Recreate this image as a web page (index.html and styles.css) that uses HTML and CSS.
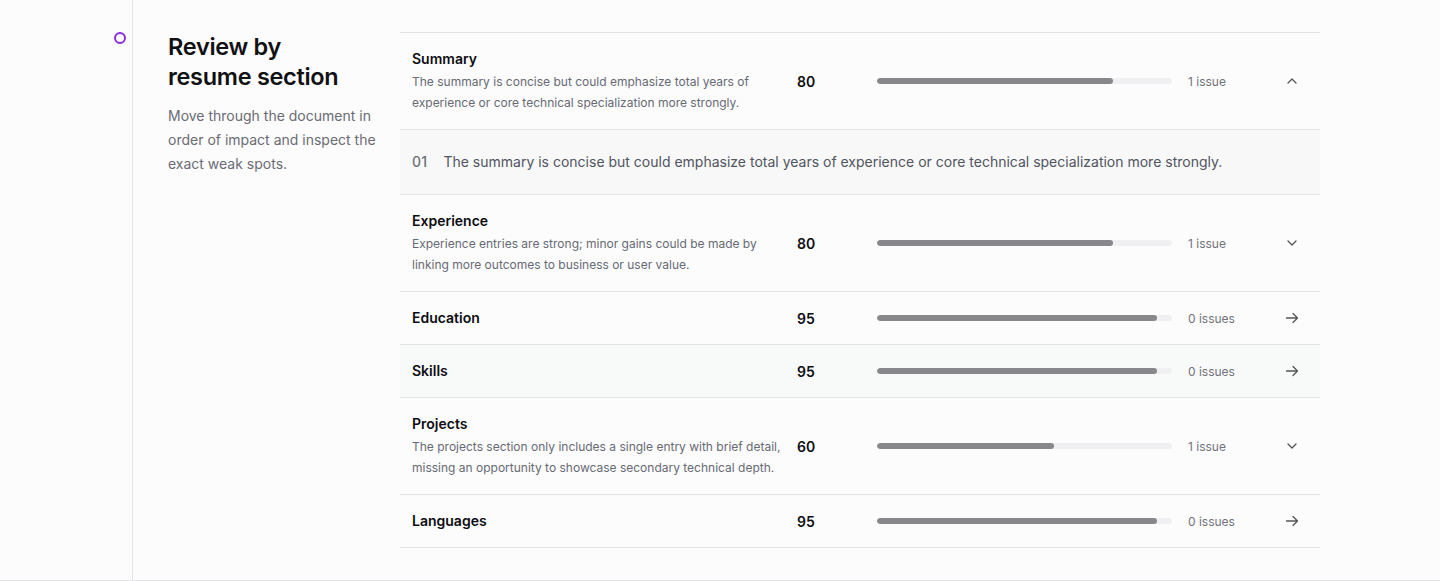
FILE: index.html
```html
<!DOCTYPE html>
<html lang="en">
<head>
<meta charset="utf-8">
<title>Review by resume section</title>
<link rel="stylesheet" href="styles.css">
</head>
<body>
<section class="section">
  <div class="rail">
    <span class="dot"></span>
  </div>
  <div class="content">
    <div class="intro">
      <h2 class="heading">Review by resume section</h2>
      <p class="lead">Move through the document in order of impact and inspect the exact weak spots.</p>
    </div>
    <div class="list">
      <div class="row">
        <div class="info">
          <div class="title">Summary</div>
          <div class="desc">The summary is concise but could emphasize total years of experience or core technical specialization more strongly.</div>
        </div>
        <div class="score">80</div>
        <div class="track"><div class="fill" style="width:80%"></div></div>
        <div class="issues">1 issue</div>
        <div class="icon"><svg viewBox="0 0 16 16" width="16" height="16"><path d="M4 10l4-4 4 4" fill="none" stroke="#555" stroke-width="1.3" stroke-linecap="round" stroke-linejoin="round"/></svg></div>
      </div>
      <div class="detail">
        <span class="num">01</span>
        <span class="detail-text">The summary is concise but could emphasize total years of experience or core technical specialization more strongly.</span>
      </div>
      <div class="row">
        <div class="info">
          <div class="title">Experience</div>
          <div class="desc">Experience entries are strong; minor gains could be made by linking more outcomes to business or user value.</div>
        </div>
        <div class="score">80</div>
        <div class="track"><div class="fill" style="width:80%"></div></div>
        <div class="issues">1 issue</div>
        <div class="icon"><svg viewBox="0 0 16 16" width="16" height="16"><path d="M4 6l4 4 4-4" fill="none" stroke="#555" stroke-width="1.3" stroke-linecap="round" stroke-linejoin="round"/></svg></div>
      </div>
      <div class="row">
        <div class="info"><div class="title">Education</div></div>
        <div class="score">95</div>
        <div class="track"><div class="fill" style="width:95%"></div></div>
        <div class="issues">0 issues</div>
        <div class="icon"><svg viewBox="0 0 16 16" width="16" height="16"><path d="M2.5 8h11M9 3.5L13.5 8 9 12.5" fill="none" stroke="#555" stroke-width="1.3" stroke-linecap="round" stroke-linejoin="round"/></svg></div>
      </div>
      <div class="row row-hover">
        <div class="info"><div class="title">Skills</div></div>
        <div class="score">95</div>
        <div class="track"><div class="fill" style="width:95%"></div></div>
        <div class="issues">0 issues</div>
        <div class="icon"><svg viewBox="0 0 16 16" width="16" height="16"><path d="M2.5 8h11M9 3.5L13.5 8 9 12.5" fill="none" stroke="#555" stroke-width="1.3" stroke-linecap="round" stroke-linejoin="round"/></svg></div>
      </div>
      <div class="row">
        <div class="info">
          <div class="title">Projects</div>
          <div class="desc">The projects section only includes a single entry with brief detail, missing an opportunity to showcase secondary technical depth.</div>
        </div>
        <div class="score">60</div>
        <div class="track"><div class="fill" style="width:60%"></div></div>
        <div class="issues">1 issue</div>
        <div class="icon"><svg viewBox="0 0 16 16" width="16" height="16"><path d="M4 6l4 4 4-4" fill="none" stroke="#555" stroke-width="1.3" stroke-linecap="round" stroke-linejoin="round"/></svg></div>
      </div>
      <div class="row">
        <div class="info"><div class="title">Languages</div></div>
        <div class="score">95</div>
        <div class="track"><div class="fill" style="width:95%"></div></div>
        <div class="issues">0 issues</div>
        <div class="icon"><svg viewBox="0 0 16 16" width="16" height="16"><path d="M2.5 8h11M9 3.5L13.5 8 9 12.5" fill="none" stroke="#555" stroke-width="1.3" stroke-linecap="round" stroke-linejoin="round"/></svg></div>
      </div>
    </div>
  </div>
</section>
</body>
</html>
```
FILE: styles.css
```css
* { box-sizing: border-box; }
html, body {
  margin: 0;
  padding: 0;
  background: #fcfcfc;
  font-family: Inter, "Noto Sans", "Liberation Sans", sans-serif;
  color: #0d0d12;
}
.section {
  display: flex;
  border-bottom: 1px solid #e4e4e7;
  height: 581px;
}
.rail {
  width: 133px;
  flex: none;
  border-right: 1px solid #e4e4e7;
  padding-top: 32px;
  padding-left: 114px;
}
.dot {
  display: block;
  width: 12px;
  height: 12px;
  border: 2px solid #8a2be2;
  border-radius: 50%;
}
.content {
  flex: 1;
  display: flex;
  gap: 24px;
  padding: 32px 120px 32px 35px;
}
.intro {
  width: 208px;
  flex: none;
}
.heading {
  max-width: 180px;
  margin: 0;
  font-size: 23.5px;
  line-height: 30px;
  font-weight: 600;
  letter-spacing: -0.3px;
  color: #111114;
}
.lead {
  margin: 12px 0 0;
  font-size: 14px;
  line-height: 24px;
  color: #6b6b75;
}
.list {
  flex: 1;
  border-top: 1px solid #e4e4e7;
}
.row {
  display: grid;
  grid-template-columns: minmax(0, 1fr) 64px 295px 80px 24px;
  column-gap: 16px;
  align-items: center;
  padding: 16px 12px;
  border-bottom: 1px solid #e4e4e7;
}
.row-hover { background: #f8f9f9; }
.title {
  font-size: 14px;
  line-height: 20px;
  font-weight: 600;
  color: #0d0d12;
}
.desc {
  margin-top: 2px;
  font-size: 12px;
  line-height: 21px;
  color: #676a74;
}
.score {
  font-size: 14px;
  font-weight: 600;
  color: #0d0d12;
}
.track {
  height: 6px;
  border-radius: 3px;
  background: #f0f0f2;
  overflow: hidden;
}
.fill {
  height: 100%;
  border-radius: 3px;
  background: #87878c;
}
.issues {
  font-size: 12px;
  color: #73737c;
}
.icon {
  display: flex;
  align-items: center;
}
.icon svg { display: block; }
.detail {
  display: flex;
  gap: 16px;
  align-items: center;
  padding: 20px 12px;
  background: #f8f8f8;
  border-bottom: 1px solid #e4e4e7;
  font-size: 14px;
  line-height: 24px;
}
.num {
  font-weight: 500;
  color: #6e7079;
  letter-spacing: 0.3px;
}
.detail-text { color: #515461; }
```
